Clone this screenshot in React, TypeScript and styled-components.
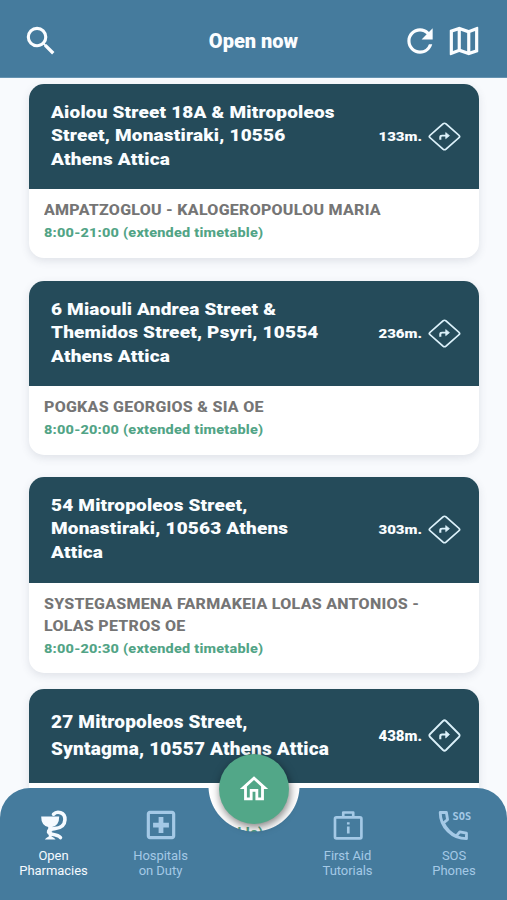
import React from "react";
import styled, { createGlobalStyle } from "styled-components";
import { MdSearch, MdRefresh, MdOutlineMap, MdOutlineHome, MdOutlineLocalHospital } from "react-icons/md";

const GlobalStyle = createGlobalStyle`
  * { box-sizing: border-box; }
  body { margin: 0; background: #f8f9fc; font-family: Roboto, "Liberation Sans", sans-serif; }
`;

const Screen = styled.div`
  position: relative;
  width: 507px;
  height: 900px;
  overflow: hidden;
  display: flex;
  flex-direction: column;
  background: #f8fafd;
`;

const TopBar = styled.header`
  flex: none;
  height: 78px;
  padding: 4px 24px 0 22px;
  display: grid;
  grid-template-columns: 1fr auto 1fr;
  align-items: center;
  color: #fbfdff;
  background: #457b9d;
  border-bottom: 1px solid #6593b1;
`;

const Title = styled.h1`
  margin: 0 0 0 2px;
  font-size: 20px;
  font-weight: 900;
  letter-spacing: 0;
`;

const Actions = styled.div`
  display: flex;
  justify-content: flex-end;
  gap: 6px;
`;

const IconButton = styled.button`
  width: 38px;
  height: 38px;
  padding: 0;
  border: 0;
  display: flex;
  background: none;
  color: inherit;
  svg { width: 38px; height: 38px; }
`;

const List = styled.main`
  display: flex;
  flex-direction: column;
  padding: 6px 28px 0 29px;
`;

const Card = styled.article<{ $height: number; $gap: number }>`
  flex: none;
  height: ${(p) => p.$height}px;
  margin-bottom: ${(p) => p.$gap}px;
  border-radius: 15px;
  overflow: hidden;
  background: #fff;
  box-shadow: 0 3px 9px rgba(60, 70, 90, 0.13);
`;

const CardHead = styled.div<{ $height: number }>`
  height: ${(p) => p.$height}px;
  padding: 0 18px 0 22px;
  display: flex;
  align-items: center;
  justify-content: space-between;
  color: #fafdff;
  background: #254b5a;
`;

const Address = styled.div<{ $squash: number }>`
  white-space: pre-line;
  font-size: 19px;
  line-height: 27px;
  font-weight: 900;
  letter-spacing: 0.18px;
  margin-top: -2px;
  transform: scaleY(${(p) => p.$squash});
`;

const Distance = styled.div<{ $squash: number }>`
  display: flex;
  align-items: center;
  gap: 6px;
  font-size: 15px;
  font-weight: 900;
  transform: scaleY(${(p) => p.$squash});
  svg { width: 33px; height: 33px; }
`;

const CardBody = styled.div<{ $squash: number }>`
  padding: 12px 15px;
  transform: scaleY(${(p) => p.$squash});
  transform-origin: top;
`;

const Name = styled.div`
  min-height: 25px;
  white-space: pre-line;
  font-size: 16px;
  line-height: 25px;
  font-weight: 800;
  letter-spacing: 0.26px;
  color: #757575;
`;

const Hours = styled.div`
  font-size: 14.5px;
  line-height: 27px;
  font-weight: 800;
  letter-spacing: 0.21px;
  color: #52a486;
`;

const Nav = styled.nav`
  position: absolute;
  left: 0;
  right: 0;
  bottom: 0;
  height: 112px;
  padding: 17px 0 0;
  display: grid;
  grid-template-columns: 107px 107px 80px 107px 106px;
  border-radius: 30px 30px 0 0;
  background: radial-gradient(circle at 254px -2px, transparent 45px, #457b9d 46px);
`;

const Tab = styled.a<{ $active?: boolean }>`
  display: flex;
  flex-direction: column;
  align-items: center;
  text-align: center;
  white-space: pre-line;
  font-size: 13px;
  line-height: 15px;
  letter-spacing: -0.05px;
  color: ${(p) => (p.$active ? "#f5faff" : "#a4c9e6")};
  svg { width: 38px; height: 38px; margin: 1px 0 4px; flex: none; }
`;

const HomeButton = styled.button`
  position: absolute;
  left: 219px;
  top: 754px;
  width: 70px;
  height: 70px;
  padding: 0;
  border: 0;
  border-radius: 50%;
  display: flex;
  align-items: center;
  justify-content: center;
  color: #fff;
  background: #52a788;
  box-shadow: 1px 3px 8px rgba(0, 0, 0, 0.5);
  svg { width: 34px; height: 34px; }
`;

const DirectionIcon = () => (
  <svg viewBox="0 0 33 33" fill="none" stroke="#dcf1fa" strokeWidth="1.8" strokeLinejoin="round">
    <path d="M15 2 2.100 15q-1.500 1.500 0 3L15 31q1.500 1.400 3 0l12.900-13q1.500-1.500 0-3L18 2q-1.500-1.400-3 0Z" />
    <path d="M12.300 20.300v-3q0-1.800 1.800-1.800h4.500" strokeWidth="2.100" />
    <path d="m17.700 12 3.800 3.500-3.800 3.500Z" fill="#dcf1fa" strokeWidth=".7" />
  </svg>
);

const ChaliceIcon = () => (
  <svg viewBox="0 0 40 40" fill="none" stroke="currentColor" strokeLinecap="round">
    <path d="M6.500 11h19q0 9.500-7.400 11v5h-4.200v-5Q6.500 20.500 6.500 11Z" fill="currentColor" stroke="none" />
    <path d="M19.500 8.600C23 5 32 6 31.500 14.500c-.3 7.500-6 8.800-11 9.300-7 .7-8.500 4.500-2.500 6 4 .7 7 1.200 8.800 3.400" strokeWidth="3.800" />
    <path d="M16 28v4" strokeWidth="3" />
    <path d="M12.500 34.400q3.500-3.400 7 0Z" fill="currentColor" strokeWidth="1.800" />
  </svg>
);

const FirstAidIcon = () => (
  <svg viewBox="0 0 40 40" fill="none" stroke="currentColor" strokeWidth="2.800" strokeLinejoin="round">
    <rect x="6.300" y="12" width="27.800" height="22" rx="1.500" />
    <path d="M15 12V6.800h10.500V12" />
    <path d="M20.300 17v2.600M20.300 21.500v7.500" />
  </svg>
);

const PhoneIcon = () => (
  <svg viewBox="0 0 40 40" fill="none" stroke="currentColor" strokeWidth="3" strokeLinejoin="round" overflow="visible">
    <path d="M5.500 6.800h6.500l1.200 7.500-4.300 3.600C12 24.500 16 28.500 22.500 31.500l3.600-4.200 7 1.300v5.800C18 34.400 5.500 22 5.500 6.800Z" />
    <text x="18.500" y="14.500" textLength="19.500" lengthAdjust="spacingAndGlyphs" fill="currentColor" stroke="none" fontFamily="DejaVu Sans Mono" fontWeight="700" fontSize="11.500">SOS</text>
  </svg>
);

const SQUASH = 0.874;

const pharmacies = [
  { address: "Aiolou Street 18A & Mitropoleos\nStreet, Monastiraki, 10556\nAthens Attica", distance: "133m.", name: "AMPATZOGLOU - KALOGEROPOULOU MARIA", hours: "8:00-21:00 (extended timetable)", height: 174, head: 105, gap: 22.600, squash: SQUASH },
  { address: "6 Miaouli Andrea Street &\nThemidos Street, Psyri, 10554\nAthens Attica", distance: "236m.", name: "POGKAS GEORGIOS & SIA OE", hours: "8:00-20:00 (extended timetable)", height: 174, head: 105, gap: 22.600, squash: SQUASH },
  { address: "54 Mitropoleos Street,\nMonastiraki, 10563 Athens\nAttica", distance: "303m.", name: "SYSTEGASMENA FARMAKEIA LOLAS ANTONIOS -\nLOLAS PETROS OE", hours: "8:00-20:30 (extended timetable)", height: 196, head: 105.500, gap: 15.800, squash: SQUASH },
  { address: "27 Mitropoleos Street,\nSyntagma, 10557 Athens Attica", distance: "438m.", name: "", hours: "8:00-20:00 (extended timetable)", height: 174, head: 94, gap: 0, squash: 1 },
];

export default function App() {
  return (
    <Screen>
      <GlobalStyle />
      <TopBar>
        <IconButton aria-label="Search"><MdSearch /></IconButton>
        <Title>Open now</Title>
        <Actions>
          <IconButton aria-label="Refresh"><MdRefresh /></IconButton>
          <IconButton aria-label="Map"><MdOutlineMap /></IconButton>
        </Actions>
      </TopBar>
      <List>
        {pharmacies.map((p) => (
          <Card key={p.distance} $height={p.height} $gap={p.gap}>
            <CardHead $height={p.head}>
              <Address $squash={p.squash}>{p.address}</Address>
              <Distance $squash={p.squash}>{p.distance}<DirectionIcon /></Distance>
            </CardHead>
            <CardBody $squash={p.squash}>
              <Name>{p.name}</Name>
              <Hours>{p.hours}</Hours>
            </CardBody>
          </Card>
        ))}
      </List>
      <Nav>
        <Tab $active><ChaliceIcon />{"Open\nPharmacies"}</Tab>
        <Tab><MdOutlineLocalHospital />{"Hospitals\non Duty"}</Tab>
        <span />
        <Tab><FirstAidIcon />{"First Aid\nTutorials"}</Tab>
        <Tab><PhoneIcon />{"SOS\nPhones"}</Tab>
      </Nav>
      <HomeButton aria-label="Home"><MdOutlineHome /></HomeButton>
    </Screen>
  );
}
